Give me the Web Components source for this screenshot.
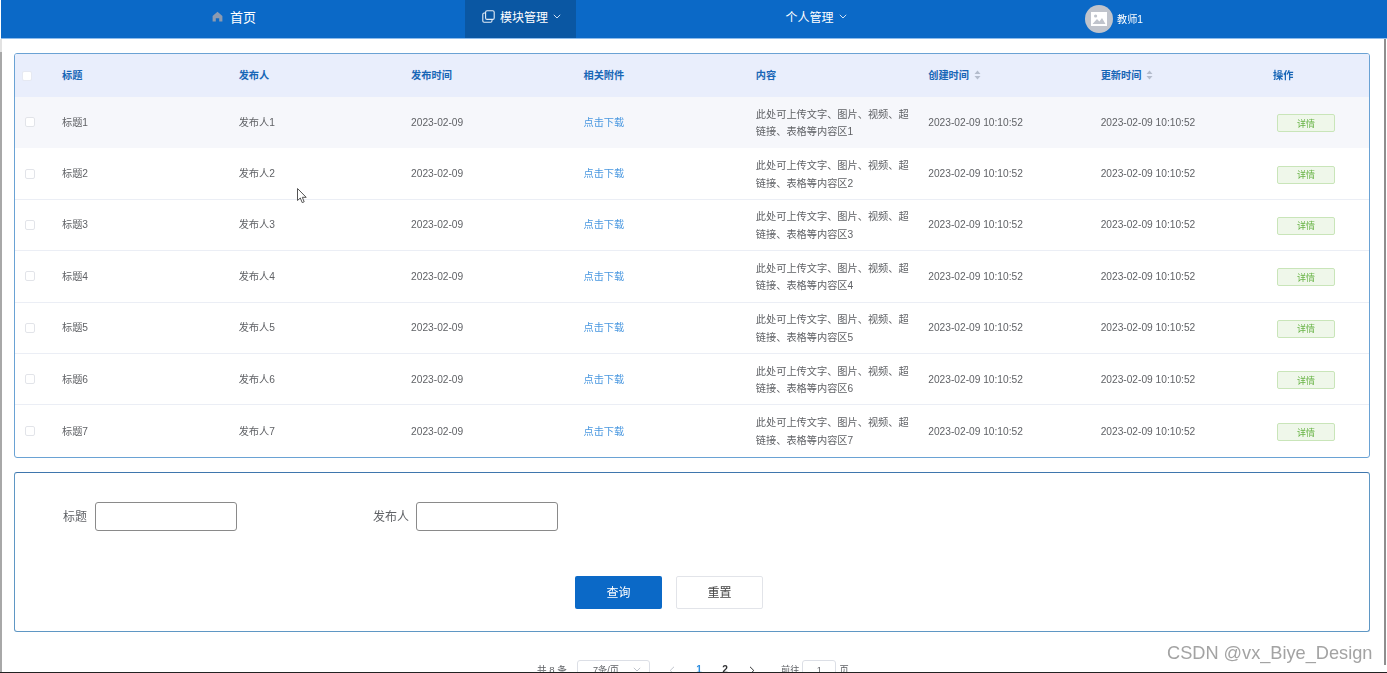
<!DOCTYPE html>
<html lang="zh"><head><meta charset="utf-8"><title>列表</title>
<style>
html,body{margin:0;height:673px;overflow:hidden;background:#fff;font-family:"Liberation Sans","Noto Sans CJK SC",sans-serif}
</style></head><body>
<app-shell>
  <top-nav></top-nav>
  <data-table></data-table>
  <search-card></search-card>
  <page-bar></page-bar>
</app-shell>
<script>
const tpl=(el,html)=>{el.attachShadow({mode:'open'}).innerHTML=html};
customElements.define('app-shell',class extends HTMLElement{constructor(){super();tpl(this,`<style>
:host{display:block;position:relative;height:673px;overflow:hidden;box-sizing:border-box;padding:0 0 1px 0;background:#fff;color:#606266}
.frame{height:672px;overflow:hidden;padding-left:1px;box-sizing:border-box;display:flex;flex-direction:column;filter:blur(.3px)}
.line{position:absolute;left:0;right:0;bottom:0;height:1px;background:#222}
.l0{position:absolute;left:0;top:39px;height:13px;width:2px;background:#e2e2e2}
.l{position:absolute;left:0;top:52px;bottom:1px;width:2px;background:#a8a8a8}
.r{position:absolute;right:1px;top:39px;height:626px;width:2px;background:#8e8e8e}
.wm{position:absolute;left:1167px;top:641px;font-size:18.2px;line-height:24px;color:#a3a3a3;white-space:nowrap}
svg{position:absolute;left:297px;top:188px}
</style><div class="frame"><slot></slot></div><div class="l0"></div><div class="l"></div><div class="r"></div><div class="line"></div>
<div class="wm">CSDN @vx_Biye_Design</div>
<svg width="11" height="16" viewBox="0 0 11 16"><path d="M.5.5V12.5L3.3 10 5.2 14.6 7.2 13.8 5.3 9.3H9.2Z" fill="#fff" stroke="#555" stroke-width="1"/></svg>`)}});

customElements.define('top-nav',class extends HTMLElement{constructor(){super();tpl(this,`<style>
:host{display:flex;flex:none;height:39px;box-sizing:border-box;background:#0b69c7;border-bottom:1px solid #8dbcec;color:#fff;font-size:12px}
.i{display:flex;align-items:center;justify-content:center;height:38px;box-sizing:border-box;white-space:nowrap;padding-bottom:6px}
.home{width:464px;font-size:13px;padding-left:2px}
.home svg{margin-right:7px}
.mod{width:111px;background:#0a57a3;padding-left:2px}
.me{width:480px}
.user{flex:1;justify-content:flex-start;padding:0 0 0 29px}
.user .av{width:28px;height:28px;border-radius:50%;background:#c0c4cc;display:flex;align-items:center;justify-content:center;margin-right:4px}
.user span{font-size:10.2px;padding-bottom:2px}
.ch{margin-left:5px;margin-top:1px}
.cp{margin-right:5px}
</style>
<div class="i home"><svg width="11" height="11" viewBox="0 0 11 11"><path d="M5.5.8.6 5v5.4h3.2V7.2h3.4v3.2h3.2V5Z" fill="#8c9ab0"/></svg>首页</div>
<div class="i mod"><svg class="cp" width="13" height="13" viewBox="0 0 13 13" fill="none" stroke="#e4edf7" stroke-width="1.1"><rect x="3.6" y=".8" width="8.6" height="8.6" rx="1.5"/><path d="M3.6 3H2.2C1.4 3 .8 3.600.8 4.400V11c0 .7.6 1.200 1.300 1.200H8.600C9.400 12.200 10 11.600 10 10.800V9.400"/></svg>模块管理<svg class="ch" width="8" height="5" viewBox="0 0 8 5" fill="none" stroke="#cfe0f3"><path d="M.8.8 4 4 7.2.8"/></svg></div>
<div class="i me">个人管理<svg class="ch" width="8" height="5" viewBox="0 0 8 5" fill="none" stroke="#cfe0f3"><path d="M.8.8 4 4 7.2.8"/></svg></div>
<div class="i user"><div class="av"><svg width="16" height="14" viewBox="0 0 16 14"><path d="M0 0H16V14H0Z" fill="#fff"/><circle cx="4.6" cy="4" r="1.6" fill="#c0c4cc"/><path d="M1.500 12 6 7l2.400 2.400L11 6l3.500 6Z" fill="#c0c4cc"/></svg></div><span>教师1</span></div>`)}});

customElements.define('row-check',class extends HTMLElement{constructor(){super();tpl(this,`<style>
:host{display:block;width:10px;height:10px;box-sizing:border-box;background:#fff;border:1px solid #e2e4e9;border-radius:2px}</style>`)}});

customElements.define('detail-btn',class extends HTMLElement{constructor(){super();tpl(this,`<style>
:host{display:flex;align-items:center;justify-content:center;width:58px;height:18px;box-sizing:border-box;background:#eff7ea;border:1px solid #c9e5b9;border-radius:2px;color:#67b345;font-size:9px}</style><slot></slot>`)}});

const COL='grid-template-columns:47px 176.7px repeat(6,172.4px) 1fr;';
customElements.define('table-head',class extends HTMLElement{constructor(){super();tpl(this,`<style>
:host{display:grid;${COL}height:43px;align-items:center;background:#e9eefc;color:#1866b6;font-size:10.2px;font-weight:700}
.c{padding-left:7px}
.h{padding-bottom:2px}
row-check{border-color:#e6e9f2}
.s{display:flex;align-items:center;gap:5px}
</style>
<div class="c"><row-check></row-check></div>
<div class="h">标题</div><div class="h">发布人</div><div class="h">发布时间</div><div class="h">相关附件</div><div class="h">内容</div>
<div class="s h">创建时间<svg width="7" height="10" viewBox="0 0 7 10" fill="#b4bccc"><path d="M3.5.5 6.5 4H.5ZM3.5 9.5 .5 6H6.500Z"/></svg></div>
<div class="s h">更新时间<svg width="7" height="10" viewBox="0 0 7 10" fill="#b4bccc"><path d="M3.5.5 6.5 4H.5ZM3.5 9.5 .5 6H6.500Z"/></svg></div>
<div class="h">操作</div>`)}});

customElements.define('table-row',class extends HTMLElement{connectedCallback(){if(this.shadowRoot)return;const n=this.getAttribute('n');tpl(this,`<style>
:host{display:grid;${COL}height:51.4px;box-sizing:border-box;align-items:center;font-size:10.2px;color:#606266;border-bottom:1px solid #ebeef5;white-space:nowrap}
:host([alt]){background:#f6f7fb;border-bottom-color:#f6f7fb}
:host(:last-child){border-bottom:0}
.c{padding-left:10px}
.u{padding-bottom:2px}
a{color:#4a98e0;text-decoration:none}
.t{line-height:17.6px;white-space:normal;width:156px;font-size:10.2px;padding-top:2px}
.b{padding:2px 0 0 4px}
</style>
<div class="c"><row-check></row-check></div>
<div class="u">标题${n}</div><div class="u">发布人${n}</div><div>2023-02-09</div><div class="u"><a>点击下载</a></div>
<div class="t">此处可上传文字、图片、视频、超链接、表格等内容区${n}</div>
<div>2023-02-09 10:10:52</div><div>2023-02-09 10:10:52</div>
<div class="b"><detail-btn>详情</detail-btn></div>`)}});

customElements.define('data-table',class extends HTMLElement{constructor(){super();let r='';for(let i=1;i<=7;i++)r+=`<table-row n="${i}" ${i==1?'alt':''}></table-row>`;tpl(this,`<style>
:host{display:block;flex:none;margin:14px 17px 14px 13px;box-sizing:border-box;height:405px;border:1px solid #6aa2d4;border-radius:3px;overflow:hidden}
</style><table-head></table-head>${r}`)}});

customElements.define('search-card',class extends HTMLElement{constructor(){super();tpl(this,`<style>
:host{display:block;flex:none;margin:0 17px 0 13px;box-sizing:border-box;height:160px;border:1px solid #5f97c4;border-top-color:#3f76ad;border-radius:3px;font-size:12px;color:#606266}
.f{display:flex;align-items:center;padding:29px 0 0 48px;height:29px;box-sizing:content-box}
.in{width:142px;height:29px;box-sizing:border-box;border:1px solid #8a8a8a;border-radius:3px;background:#fff}
label{margin-right:8px;padding-bottom:2px}
.g{width:310px;display:flex;align-items:center}
.g+.g label{margin-right:7px}
.b{display:flex;gap:14px;padding:45px 0 0 560px}
.btn{width:87px;height:33px;box-sizing:border-box;display:flex;align-items:center;justify-content:center;border-radius:2px;font-size:12px;padding-bottom:2px}
.p{background:#0b69c7;color:#fff}
.d{background:#fff;border:1px solid #e2e4e9;color:#444}
</style>
<div class="f"><div class="g"><label>标题</label><div class="in"></div></div><div class="g"><label>发布人</label><div class="in"></div></div></div>
<div class="b"><div class="btn p">查询</div><div class="btn d">重置</div></div>`)}});

customElements.define('page-bar',class extends HTMLElement{constructor(){super();tpl(this,`<style>
:host{display:flex;flex:none;align-items:flex-start;margin-top:28px;padding-left:536px;height:26px;font-size:9.2px;line-height:20px;color:#606266;white-space:nowrap}
.tot{font-size:9.6px;width:31px}
.sel{width:73px;height:26px;box-sizing:border-box;border:1px solid #dcdfe6;border-radius:3px;margin-left:9px;display:flex;padding-left:15px;position:relative;line-height:18px}
.sel svg{position:absolute;right:8px;top:6px}
.a{width:26px;text-align:center;font-weight:700;color:#303133;font-size:10.2px}
.on{color:#2f8fe0}
.ar{width:28px;height:20px;display:flex;justify-content:center;align-items:center}
.go{width:34px;height:26px;box-sizing:border-box;border:1px solid #dcdfe6;border-radius:3px;text-align:center;line-height:18px;margin:0 3px 0 3px}
</style>
<span class="tot">共 8 条</span>
<div class="sel">7条/页<svg width="8" height="5" viewBox="0 0 8 5" fill="none" stroke="#c0c4cc"><path d="M.8.8 4 4 7.200.8"/></svg></div>
<div class="ar" style="margin-left:8px"><svg width="6" height="9" viewBox="0 0 6 9" fill="none" stroke="#c0c4cc"><path d="M5 .8 1.200 4.500 5 8.200"/></svg></div>
<div class="a on">1</div><div class="a">2</div>
<div class="ar"><svg width="6" height="9" viewBox="0 0 6 9" fill="none" stroke="#303133"><path d="M1 .8 4.800 4.500 1 8.200"/></svg></div>
<span style="margin-left:15px">前往</span><div class="go">1</div><span>页</span>`)}});
</script></body></html>
